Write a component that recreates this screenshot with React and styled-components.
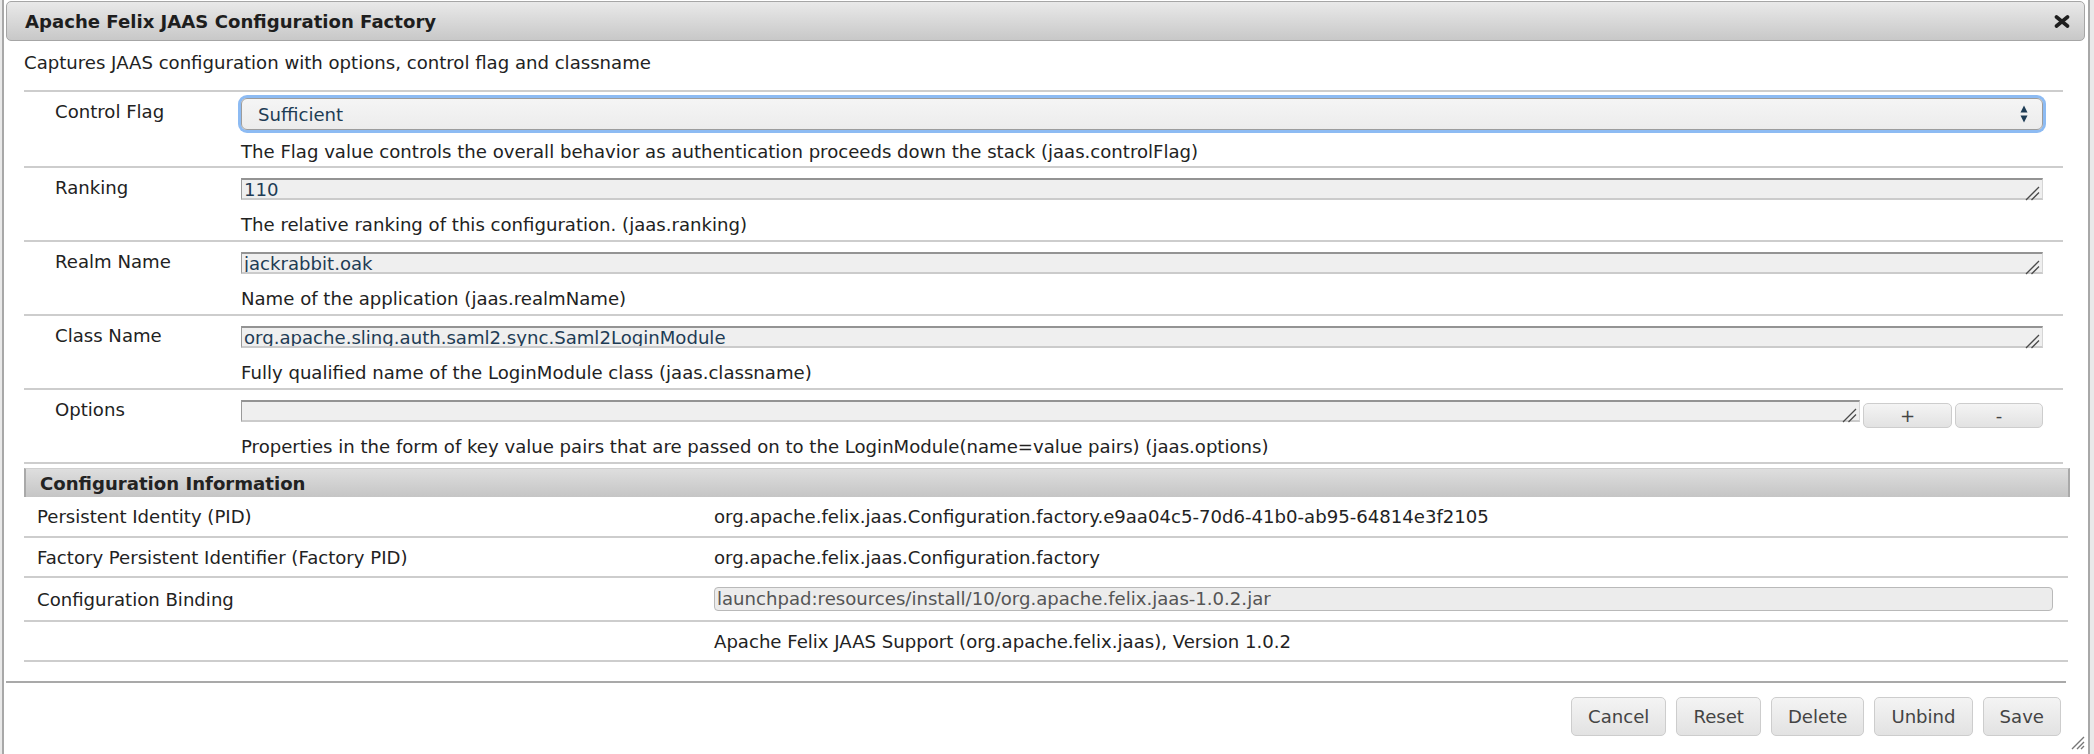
import React from 'react';
import styled, { createGlobalStyle } from 'styled-components';

const GlobalStyle = createGlobalStyle`
  html, body {
    margin: 0;
    padding: 0;
  }
  body {
    background: #e9e9e9;
    font-family: "DejaVu Sans", Verdana, sans-serif;
    font-size: 18.1px;
    color: #222;
  }
`;

const Page = styled.div`
  height: 754px;
  overflow: hidden;
  padding-left: 2px;
`;

const Dialog = styled.div`
  position: relative;
  box-sizing: border-box;
  width: 2088px;
  height: 754px;
  background: #fff;
  border: 2px solid #a8a8a8;
  border-top: none;
  border-bottom: none;
  padding: 1px 3px 0 2px;
  display: flex;
  flex-direction: column;
`;

const TitleBar = styled.div`
  display: flex;
  align-items: center;
  justify-content: space-between;
  box-sizing: border-box;
  height: 40px;
  padding: 0 14px 0 18px;
  border: 1px solid #a6a6a6;
  border-radius: 5px;
  background: linear-gradient(#e9e9e9, #c8c8c8);
  font-weight: bold;
  color: #1e1e1e;
`;

const Content = styled.div`
  padding: 0 15px 0 18px;
`;

const Description = styled.div`
  margin-right: 7px;
  padding: 11px 0 16px;
  line-height: 22px;
  border-bottom: 2px solid #cdcdcd;
`;

const Form = styled.div`
  margin-right: 7px;
`;

const FormRow = styled.div`
  display: grid;
  grid-template-columns: 217px 1fr;
  border-bottom: 2px solid #cdcdcd;
`;

const Label = styled.div`
  padding: 9px 0 0 31px;
  line-height: 22px;
`;

const Field = styled.div`
  padding: ${p => (p.$select ? '6px 20px 3px 0' : '10px 20px 4px 0')};
`;

const Help = styled.div`
  margin-top: ${p => (p.$select ? 11 : 14)}px;
  line-height: 22px;
`;

const Select = styled.div`
  display: flex;
  align-items: center;
  justify-content: space-between;
  box-sizing: border-box;
  height: 32px;
  padding: 0 14px 0 16px;
  border: 1px solid #9c9c9c;
  border-radius: 6px;
  background: linear-gradient(#f5f5f5, #ececec);
  box-shadow: 0 0 0 3px #8dbbf3;
  color: #1e3c55;
`;

const TextWrap = styled.div`
  position: relative;
  flex: 1;
`;

const TextField = styled.textarea`
  display: block;
  box-sizing: border-box;
  width: 100%;
  height: 22px;
  margin: 0;
  padding: 0 2px;
  font: inherit;
  line-height: 19px;
  color: #1e3c55;
  background: #efefef;
  border-style: solid;
  border-width: 2px 1px 2px 1px;
  border-color: #939393 #d6d6d6 #cbcbcb #9a9a9a;
  border-radius: 0;
  resize: none;
  overflow: hidden;
  white-space: nowrap;
  outline: none;
`;

const FieldGrip = styled.svg`
  position: absolute;
  right: 3px;
  bottom: -1px;
  pointer-events: none;
`;

const OptionsLine = styled.div`
  display: flex;
  align-items: flex-start;
  gap: 3px;
  height: 22px;
`;

const Button = styled.button`
  box-sizing: border-box;
  height: 39px;
  margin: 0;
  padding: 0 16px;
  font: inherit;
  color: #444;
  background: linear-gradient(#f4f4f4, #e2e2e2);
  border: 1px solid #cdcdcd;
  border-radius: 5px;
`;

const SmallButton = styled(Button)`
  flex: none;
  width: ${p => p.$w}px;
  height: 25px;
  margin-top: 3px;
  padding: 0;
  line-height: 22px;
`;

const InfoHeader = styled.div`
  box-sizing: border-box;
  height: 29px;
  margin-top: 4px;
  padding-left: 14px;
  display: flex;
  align-items: center;
  border-top: 1px solid #cfcfcf;
  border-left: 2px solid #a9a9a9;
  border-right: 2px solid #a9a9a9;
  background: linear-gradient(#dedede, #c5c5c5);
  font-weight: bold;
`;

const InfoTable = styled.div`
  margin-right: 2px;
`;

const InfoRow = styled.div`
  display: grid;
  grid-template-columns: 689px 1fr;
  align-items: center;
  height: ${p => p.$h || 38}px;
  border-bottom: 2px solid #cdcdcd;
`;

const InfoLabel = styled.div`
  padding-left: 13px;
`;

const InfoValue = styled.div`
  padding-left: 1px;
  padding-right: 15px;
`;

const Binding = styled.div`
  box-sizing: border-box;
  height: 24px;
  padding: 0 2px;
  line-height: 22px;
  color: #555;
  background: #ececec;
  border: 1px solid #b9b9b9;
  border-radius: 4px;
`;

const Footer = styled.div`
  display: flex;
  justify-content: flex-end;
  gap: 10px;
  margin-top: 19px;
  margin-right: 19px;
  padding: 14px 5px 0 0;
  border-top: 2px solid #a9a9a9;
`;

const Grip = styled.svg`
  position: absolute;
  right: 3px;
  bottom: 4px;
`;

const CloseIcon = () => (
  <svg width="16" height="13" viewBox="0 0 16 13">
    <path d="M2.5 2 L13.5 11 M13.5 2 L2.5 11" stroke="#1e1e1e" strokeWidth="3.6" strokeLinecap="round" />
  </svg>
);

const UpDown = () => (
  <svg width="8" height="18" viewBox="0 0 8 18">
    <path d="M0.5 7.5 L4 0.5 L7.5 7.5 Z" fill="#1e3c55" />
    <path d="M0.5 10.5 L7.5 10.5 L4 17.5 Z" fill="#1e3c55" />
  </svg>
);

const Text = ({ value }) => (
  <TextWrap>
    <TextField readOnly rows={1} value={value} />
    <FieldGrip width="15" height="15" viewBox="0 0 15 15">
      <path d="M1 14 L14 1 M6.5 14 L14 6.5" stroke="#4a4a4a" strokeWidth="1.3" />
    </FieldGrip>
  </TextWrap>
);

const fields = [
  {
    label: 'Ranking',
    value: '110',
    help: 'The relative ranking of this configuration. (jaas.ranking)',
  },
  {
    label: 'Realm Name',
    value: 'jackrabbit.oak',
    help: 'Name of the application (jaas.realmName)',
  },
  {
    label: 'Class Name',
    value: 'org.apache.sling.auth.saml2.sync.Saml2LoginModule',
    help: 'Fully qualified name of the LoginModule class (jaas.classname)',
  },
];

const info = [
  { label: 'Persistent Identity (PID)', value: 'org.apache.felix.jaas.Configuration.factory.e9aa04c5-70d6-41b0-ab95-64814e3f2105', h: 39 },
  { label: 'Factory Persistent Identifier (Factory PID)', value: 'org.apache.felix.jaas.Configuration.factory' },
];

export default function App() {
  return (
    <Page>
      <GlobalStyle />
      <Dialog>
        <TitleBar>
          <span>Apache Felix JAAS Configuration Factory</span>
          <CloseIcon />
        </TitleBar>
        <Content>
          <Description>Captures JAAS configuration with options, control flag and classname</Description>
          <Form>
            <FormRow>
              <Label>Control Flag</Label>
              <Field $select>
                <Select>
                  <span>Sufficient</span>
                  <UpDown />
                </Select>
                <Help $select>
                  The Flag value controls the overall behavior as authentication proceeds down the stack (jaas.controlFlag)
                </Help>
              </Field>
            </FormRow>
            {fields.map(f => (
              <FormRow key={f.label}>
                <Label>{f.label}</Label>
                <Field>
                  <Text value={f.value} />
                  <Help>{f.help}</Help>
                </Field>
              </FormRow>
            ))}
            <FormRow>
              <Label>Options</Label>
              <Field>
                <OptionsLine>
                  <Text value="" />
                  <SmallButton $w={89}>+</SmallButton>
                  <SmallButton $w={88}>-</SmallButton>
                </OptionsLine>
                <Help>
                  Properties in the form of key value pairs that are passed on to the LoginModule(name=value pairs) (jaas.options)
                </Help>
              </Field>
            </FormRow>
          </Form>
          <InfoHeader>Configuration Information</InfoHeader>
          <InfoTable>
            {info.map(r => (
              <InfoRow key={r.label} $h={r.h}>
                <InfoLabel>{r.label}</InfoLabel>
                <InfoValue>{r.value}</InfoValue>
              </InfoRow>
            ))}
            <InfoRow $h={42}>
              <InfoLabel>Configuration Binding</InfoLabel>
              <InfoValue>
                <Binding>launchpad:resources/install/10/org.apache.felix.jaas-1.0.2.jar</Binding>
              </InfoValue>
            </InfoRow>
            <InfoRow>
              <InfoLabel />
              <InfoValue>Apache Felix JAAS Support (org.apache.felix.jaas), Version 1.0.2</InfoValue>
            </InfoRow>
          </InfoTable>
        </Content>
        <Footer>
          <Button>Cancel</Button>
          <Button>Reset</Button>
          <Button>Delete</Button>
          <Button>Unbind</Button>
          <Button>Save</Button>
        </Footer>
        <Grip width="16" height="16" viewBox="0 0 16 16">
          <path d="M15 3 L3 15 M15 8 L8 15 M15 12 L12 15" stroke="#777" strokeWidth="1.4" />
        </Grip>
      </Dialog>
    </Page>
  );
}
